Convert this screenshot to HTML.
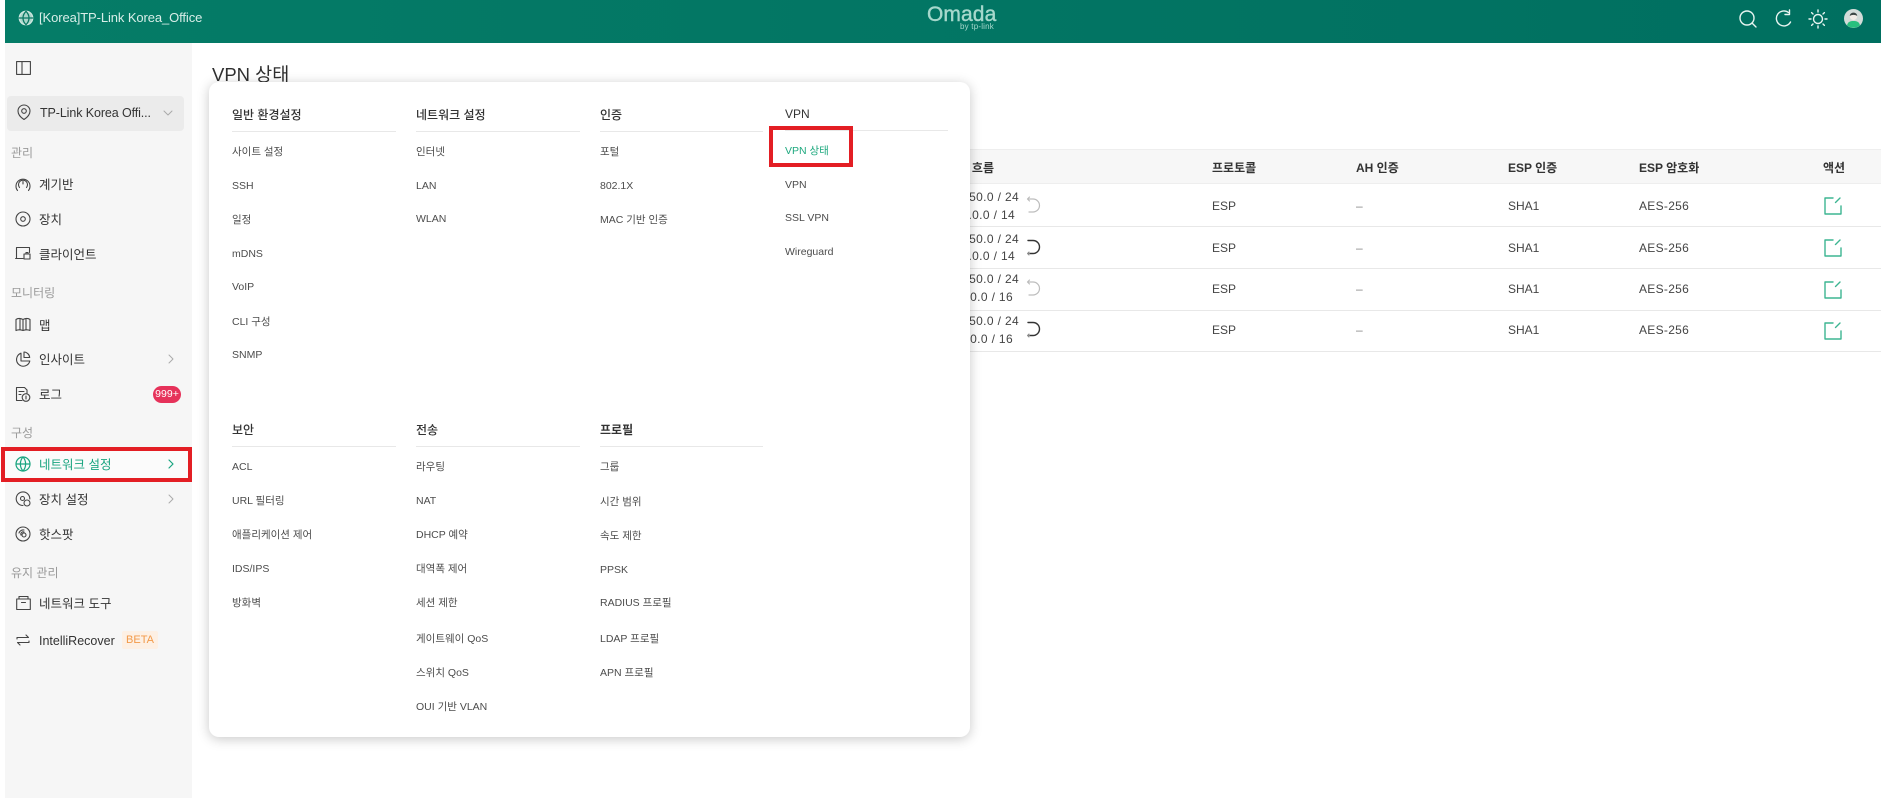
<!DOCTYPE html>
<html lang="ko"><head><meta charset="utf-8"><title>VPN 상태</title>
<style>
html,body{margin:0;padding:0;background:#fff}
body{width:1881px;height:798px;position:relative;overflow:hidden;font-family:"Liberation Sans","Noto Sans CJK KR",sans-serif;color:#3a3a3a}
.a,.s,.g,.h,.i,.c,.t{position:absolute;white-space:nowrap;line-height:20px;height:20px}
svg{position:absolute;fill:none;stroke-linecap:round;stroke-linejoin:round}
#hd{position:absolute;left:5px;top:0;width:1876px;height:43px;background:linear-gradient(90deg,#057c67,#006f60)}
#sb{position:absolute;left:5px;top:43px;width:187px;height:755px;background:#f6f6f6}
.s{font-size:12.5px;color:#333;left:39px;margin-top:1px}
.g{font-size:12px;color:#9a9a9a;left:11px;margin-top:1px}
.h{font-size:12px;color:#333;font-weight:500;margin-top:1px}
.i{font-size:10.5px;color:#4c4c4c;margin-top:1px}
.c{font-size:12px;color:#444}
.d{color:#888}
.f{letter-spacing:.35px}
.t{font-size:12px;color:#333;font-weight:700;margin-top:1px}
.l{position:absolute;height:1px;background:#e8e8e8}
.ic{stroke:#444;stroke-width:1.1}
</style></head><body>
<div id="hd"></div>
<svg style="left:18px;top:10px" width="16" height="16" viewBox="0 0 16 16" stroke="#cfe8e1" stroke-width="1.3"><circle cx="8" cy="8" r="6.7" fill="#a9d6ca"/><path d="M1.3 8h13.4M8 1.3c-4 4-4 9.400 0 13.400M8 1.300c4 4 4 9.400 0 13.400" stroke="#0a7763"/></svg>
<div class="a" style="left:39px;top:8px;font-size:13px;color:#d8eee8;letter-spacing:-.1px">[Korea]TP-Link Korea_Office</div>
<div class="a" style="left:927px;top:5px;font-size:21px;color:#a6d8cc;line-height:20px;letter-spacing:.1px;-webkit-text-stroke:.4px #a6d8cc">Omada</div>
<div class="a" style="left:960px;top:17px;font-size:8px;color:#a6d8cc;letter-spacing:.2px">by tp-link</div>
<svg style="left:1738px;top:9px" width="20" height="20" viewBox="0 0 20 20" stroke="#e8f5f1" stroke-width="1.4"><circle cx="9" cy="9" r="7"/><path d="M14 14l4 4"/></svg>
<svg style="left:1774px;top:9px" width="20" height="20" viewBox="0 0 20 20" stroke="#e8f5f1" stroke-width="1.4"><path d="M16.500 13a7.500 7.500 0 1 1-2-9.500"/><path d="M15.500 1v4.500H11"/></svg>
<svg style="left:1808px;top:9px" width="20" height="20" viewBox="0 0 20 20" stroke="#e8f5f1" stroke-width="1.4"><circle cx="10" cy="10" r="4.500"/><path d="M10 1v2M10 17v2M1 10h2M17 10h2M3.600 3.600l1.400 1.400M15 15l1.400 1.400M3.600 16.400L5 15M15 5l1.400-1.400"/></svg>
<svg style="left:1844px;top:9px" width="19" height="19" viewBox="0 0 19 19"><circle cx="9.500" cy="9.500" r="9.500" fill="#d3dcd9"/><path d="M3 16.200c1-3.700 3.500-4.200 6.500-4.200s5.500.5 6.500 4.200a9.500 9.500 0 0 1-13 0z" fill="#27c07e"/><circle cx="9.500" cy="7.500" r="3.600" fill="#f2ece6"/><path d="M5.800 7c0-4.500 7.400-4.500 7.400 0-2-1.500-5.400-1.500-7.400 0z" fill="#3c4644"/></svg>

<div id="sb"></div>
<svg class="ic" style="left:16px;top:61px" width="15" height="14" viewBox="0 0 15 14"><rect x=".6" y=".6" width="13.800" height="12.800"/><path d="M6 .6v12.800"/></svg>
<div style="position:absolute;left:7px;top:96px;width:177px;height:35px;background:#ebebeb;border-radius:4px"></div>
<svg class="ic" style="left:17px;top:104px" width="14" height="17" viewBox="0 0 14 17"><path d="M7 15.500C3 13 1 10 1 7a6 6 0 0 1 12 0c0 3-2 6-6 8.500z"/><circle cx="7" cy="7" r="2.300"/></svg>
<div class="s" style="left:40px;top:102px;letter-spacing:-.1px">TP-Link Korea Offi...</div>
<svg style="left:163px;top:110px" width="10" height="7" viewBox="0 0 10 7" stroke="#aaa"><path d="M1 1l4 4 4-4"/></svg>

<div class="g" style="top:142px">관리</div>
<svg class="ic" style="left:15px;top:176px" width="16" height="16" viewBox="0 0 16 16"><path d="M2.500 14.500a7 7 0 1 1 11 0"/><path d="M4.500 11.500a4.500 4.500 0 1 1 7 0M8 5.500v2.500"/></svg>
<div class="s" style="top:174px">계기반</div>
<svg class="ic" style="left:15px;top:211px" width="16" height="16" viewBox="0 0 16 16"><circle cx="8" cy="8" r="7"/><circle cx="8" cy="8" r="2.300"/></svg>
<div class="s" style="top:209px">장치</div>
<svg class="ic" style="left:15px;top:246px" width="16" height="15" viewBox="0 0 16 15"><path d="M8 12.500H1.500V1.500h13v5"/><path d="M.6 12.500h7"/><rect x="9" y="8" width="6" height="5"/><path d="M11 8V6.500h2V8"/></svg>
<div class="s" style="top:244px">클라이언트</div>

<div class="g" style="top:282px">모니터링</div>
<svg class="ic" style="left:15px;top:317px" width="16" height="15" viewBox="0 0 16 15"><path d="M1 2.500c2-1.500 4-1.500 7 0 3-1.500 5-1.500 7 0v11c-2-1-4-1-7 0-3-1-5-1-7 0zM5 1.500v11M8 2.500v11M11 1.500v11"/></svg>
<div class="s" style="top:315px">맵</div>
<svg class="ic" style="left:15px;top:351px" width="16" height="16" viewBox="0 0 16 16"><path d="M6 2.200A6.700 6.700 0 1 0 14.800 10H6z"/><path d="M9 1v5.500h5.700A6 6 0 0 0 9 1z"/></svg>
<div class="s" style="top:349px">인사이트</div>
<svg style="left:168px;top:354px" width="7" height="10" viewBox="0 0 7 10" stroke="#aaa"><path d="M1 1l4 4-4 4"/></svg>
<svg class="ic" style="left:15px;top:386px" width="16" height="16" viewBox="0 0 16 16"><path d="M7 14.500H1.500v-13h8l2.500 2.500v3"/><path d="M4 5.500h5M4 8.500h2"/><circle cx="11" cy="11.500" r="3.800"/><path d="M11 10v3"/></svg>
<div class="s" style="top:384px">로그</div>
<div class="a" style="left:153px;top:386px;width:28px;height:17px;line-height:17px;border-radius:9px;background:#e6325a;color:#fff;font-size:10.500px;text-align:center">999+</div>

<div class="g" style="top:422px">구성</div>
<div style="position:absolute;left:5px;top:451px;width:183px;height:27px;background:#fbfbfb"></div>
<svg style="left:15px;top:456px" width="16" height="16" viewBox="0 0 16 16" stroke="#18a47f" stroke-width="1.200"><circle cx="8" cy="8" r="7"/><path d="M1 8h14M8 1c-3.500 4-3.500 10 0 14M8 1c3.500 4 3.500 10 0 14"/></svg>
<div class="s" style="top:454px;color:#18a47f">네트워크 설정</div>
<svg style="left:168px;top:459px" width="7" height="10" viewBox="0 0 7 10" stroke="#18a47f" stroke-width="1.200"><path d="M1 1l4 4-4 4"/></svg>
<svg class="ic" style="left:15px;top:491px" width="16" height="16" viewBox="0 0 16 16"><path d="M8 14.500A6.800 6.800 0 1 1 14.800 8"/><circle cx="7.500" cy="7.500" r="2"/><circle cx="12" cy="12" r="3"/></svg>
<div class="s" style="top:489px">장치 설정</div>
<svg style="left:168px;top:494px" width="7" height="10" viewBox="0 0 7 10" stroke="#aaa"><path d="M1 1l4 4-4 4"/></svg>
<svg class="ic" style="left:15px;top:526px" width="16" height="16" viewBox="0 0 16 16"><circle cx="8" cy="8" r="7"/><path d="M4 7a4.500 4.500 0 0 1 5-3M6 9a2.300 2.300 0 0 1 3-3"/><circle cx="9" cy="9" r="2"/></svg>
<div class="s" style="top:524px">핫스팟</div>

<div class="g" style="top:562px">유지 관리</div>
<svg class="ic" style="left:16px;top:595px" width="15" height="16" viewBox="0 0 15 16"><path d="M.7 4h13.600v10.500H.7zM3 4V1.500h9V4M5.500 7.500h4"/></svg>
<div class="s" style="top:593px">네트워크 도구</div>
<svg class="ic" style="left:16px;top:632px" width="14" height="16" viewBox="0 0 14 16"><path d="M1 7V5.500h11.500L10 3M13 9v1.500H1.500L4 13"/></svg>
<div class="s" style="top:630px">IntelliRecover</div>
<div class="a" style="left:122px;top:631px;width:36px;height:18px;line-height:18px;background:#fdf0e4;color:#f29a4a;font-size:11px;text-align:center;border-radius:2px">BETA</div>

<div class="a" style="left:212px;top:63px;font-size:18.5px;color:#2f2f2f;line-height:24px;height:24px">VPN 상태</div>

<!-- table -->
<div style="position:absolute;left:960px;top:149px;width:921px;height:35px;background:#f7f7f7;border-top:1px solid #eee;border-bottom:1px solid #eee;box-sizing:border-box"></div>
<div class="l" style="left:960px;width:921px;top:226px"></div>
<div class="l" style="left:960px;width:921px;top:268px"></div>
<div class="l" style="left:960px;width:921px;top:310px"></div>
<div class="l" style="left:960px;width:921px;top:351px"></div>
<div class="t" style="left:900px;width:94px;text-align:right;top:157px">로컬 흐름</div>
<div class="t" style="left:1212px;top:157px">프로토콜</div>
<div class="t" style="left:1356px;top:157px">AH 인증</div>
<div class="t" style="left:1508px;top:157px">ESP 인증</div>
<div class="t" style="left:1639px;top:157px">ESP 암호화</div>
<div class="t" style="left:1823px;top:157px">액션</div>

<div class="c f" style="left:880px;width:139px;text-align:right;top:187px">192.168.50.0 / 24</div>
<div class="c f" style="left:880px;width:135px;text-align:right;top:205px">10.8.0.0 / 14</div>
<div class="c f" style="left:880px;width:139px;text-align:right;top:229px">192.168.50.0 / 24</div>
<div class="c f" style="left:880px;width:135px;text-align:right;top:246px">10.8.0.0 / 14</div>
<div class="c f" style="left:880px;width:139px;text-align:right;top:269px">192.168.50.0 / 24</div>
<div class="c f" style="left:880px;width:133px;text-align:right;top:287px">10.0.0 / 16</div>
<div class="c f" style="left:880px;width:139px;text-align:right;top:311px">192.168.50.0 / 24</div>
<div class="c f" style="left:880px;width:133px;text-align:right;top:329px">10.0.0 / 16</div>

<svg style="left:1026px;top:196px" width="15" height="19" viewBox="0 0 15 19" stroke="#bdbdbd" stroke-width="1.200"><path d="M1.500 3h5.500a6.500 6.500 0 0 1 0 13H3M3.500 1L1.500 3l2 2"/></svg>
<svg style="left:1026px;top:239px" width="15" height="19" viewBox="0 0 15 19"><path d="M2 1.500h5a6.500 6.500 0 0 1 0 13H3.500" stroke="#333" stroke-width="1.400"/><path d="M3.500 14.500H1.500M3 13l-1.500 1.500L3 16" stroke="#888" stroke-width="1"/></svg>
<svg style="left:1026px;top:279px" width="15" height="19" viewBox="0 0 15 19" stroke="#bdbdbd" stroke-width="1.200"><path d="M1.500 3h5.500a6.500 6.500 0 0 1 0 13H3M3.500 1L1.500 3l2 2"/></svg>
<svg style="left:1026px;top:321px" width="15" height="19" viewBox="0 0 15 19"><path d="M2 1.500h5a6.500 6.500 0 0 1 0 13H3.500" stroke="#333" stroke-width="1.400"/><path d="M3.500 14.500H1.500M3 13l-1.500 1.500L3 16" stroke="#888" stroke-width="1"/></svg>

<div class="c" style="left:1212px;top:196px">ESP</div><div class="c d" style="left:1356px;top:196px">–</div><div class="c" style="left:1508px;top:196px">SHA1</div><div class="c" style="left:1639px;top:196px;letter-spacing:.3px">AES-256</div>
<div class="c" style="left:1212px;top:238px">ESP</div><div class="c d" style="left:1356px;top:238px">–</div><div class="c" style="left:1508px;top:238px">SHA1</div><div class="c" style="left:1639px;top:238px;letter-spacing:.3px">AES-256</div>
<div class="c" style="left:1212px;top:279px">ESP</div><div class="c d" style="left:1356px;top:279px">–</div><div class="c" style="left:1508px;top:279px">SHA1</div><div class="c" style="left:1639px;top:279px;letter-spacing:.3px">AES-256</div>
<div class="c" style="left:1212px;top:320px">ESP</div><div class="c d" style="left:1356px;top:320px">–</div><div class="c" style="left:1508px;top:320px">SHA1</div><div class="c" style="left:1639px;top:320px;letter-spacing:.3px">AES-256</div>

<svg style="left:1824px;top:197px" width="18" height="18" viewBox="0 0 18 18" stroke="#3db592" stroke-width="1.400"><path d="M9 1H1v16h16V9M16 1l-4.500 4.500"/></svg>
<svg style="left:1824px;top:239px" width="18" height="18" viewBox="0 0 18 18" stroke="#3db592" stroke-width="1.400"><path d="M9 1H1v16h16V9M16 1l-4.500 4.500"/></svg>
<svg style="left:1824px;top:281px" width="18" height="18" viewBox="0 0 18 18" stroke="#3db592" stroke-width="1.400"><path d="M9 1H1v16h16V9M16 1l-4.500 4.500"/></svg>
<svg style="left:1824px;top:322px" width="18" height="18" viewBox="0 0 18 18" stroke="#3db592" stroke-width="1.400"><path d="M9 1H1v16h16V9M16 1l-4.500 4.500"/></svg>

<!-- menu -->
<div style="position:absolute;left:209px;top:82px;width:761px;height:655px;background:#fff;border-radius:10px;box-shadow:0 2px 12px rgba(0,0,0,.22)"></div>

<div class="h" style="left:232px;top:104px">일반 환경설정</div><div class="l" style="left:232px;width:164px;top:131px"></div>
<div class="i" style="left:232px;top:141px">사이트 설정</div>
<div class="i" style="left:232px;top:175px">SSH</div>
<div class="i" style="left:232px;top:209px">일정</div>
<div class="i" style="left:232px;top:243px">mDNS</div>
<div class="i" style="left:232px;top:276px">VoIP</div>
<div class="i" style="left:232px;top:311px">CLI 구성</div>
<div class="i" style="left:232px;top:344px">SNMP</div>

<div class="h" style="left:416px;top:104px">네트워크 설정</div><div class="l" style="left:416px;width:164px;top:131px"></div>
<div class="i" style="left:416px;top:141px">인터넷</div>
<div class="i" style="left:416px;top:175px">LAN</div>
<div class="i" style="left:416px;top:208px">WLAN</div>

<div class="h" style="left:600px;top:104px">인증</div><div class="l" style="left:600px;width:163px;top:131px"></div>
<div class="i" style="left:600px;top:141px">포털</div>
<div class="i" style="left:600px;top:175px">802.1X</div>
<div class="i" style="left:600px;top:209px">MAC 기반 인증</div>

<div class="h" style="left:785px;top:103px">VPN</div><div class="l" style="left:785px;width:163px;top:130px"></div>
<div class="i" style="left:785px;top:140px;color:#1fa97f">VPN 상태</div>
<div class="i" style="left:785px;top:174px">VPN</div>
<div class="i" style="left:785px;top:207px">SSL VPN</div>
<div class="i" style="left:785px;top:241px">Wireguard</div>

<div class="h" style="left:232px;top:419px">보안</div><div class="l" style="left:232px;width:164px;top:446px"></div>
<div class="i" style="left:232px;top:456px">ACL</div>
<div class="i" style="left:232px;top:490px">URL 필터링</div>
<div class="i" style="left:232px;top:524px">애플리케이션 제어</div>
<div class="i" style="left:232px;top:558px">IDS/IPS</div>
<div class="i" style="left:232px;top:592px">방화벽</div>

<div class="h" style="left:416px;top:419px">전송</div><div class="l" style="left:416px;width:164px;top:446px"></div>
<div class="i" style="left:416px;top:456px">라우팅</div>
<div class="i" style="left:416px;top:490px">NAT</div>
<div class="i" style="left:416px;top:524px">DHCP 예약</div>
<div class="i" style="left:416px;top:558px">대역폭 제어</div>
<div class="i" style="left:416px;top:592px">세션 제한</div>
<div class="i" style="left:416px;top:628px">게이트웨이 QoS</div>
<div class="i" style="left:416px;top:662px">스위치 QoS</div>
<div class="i" style="left:416px;top:696px">OUI 기반 VLAN</div>

<div class="h" style="left:600px;top:419px;font-weight:700">프로필</div><div class="l" style="left:600px;width:163px;top:446px"></div>
<div class="i" style="left:600px;top:456px">그룹</div>
<div class="i" style="left:600px;top:491px">시간 범위</div>
<div class="i" style="left:600px;top:525px">속도 제한</div>
<div class="i" style="left:600px;top:559px">PPSK</div>
<div class="i" style="left:600px;top:592px">RADIUS 프로필</div>
<div class="i" style="left:600px;top:628px">LDAP 프로필</div>
<div class="i" style="left:600px;top:662px">APN 프로필</div>

<!-- annotation boxes -->
<div style="position:absolute;left:769px;top:126px;width:84px;height:41px;box-sizing:border-box;border:4px solid #e31e24"></div>
<div style="position:absolute;left:1px;top:447px;width:191px;height:35px;box-sizing:border-box;border:4px solid #e31e24"></div>
</body></html>
